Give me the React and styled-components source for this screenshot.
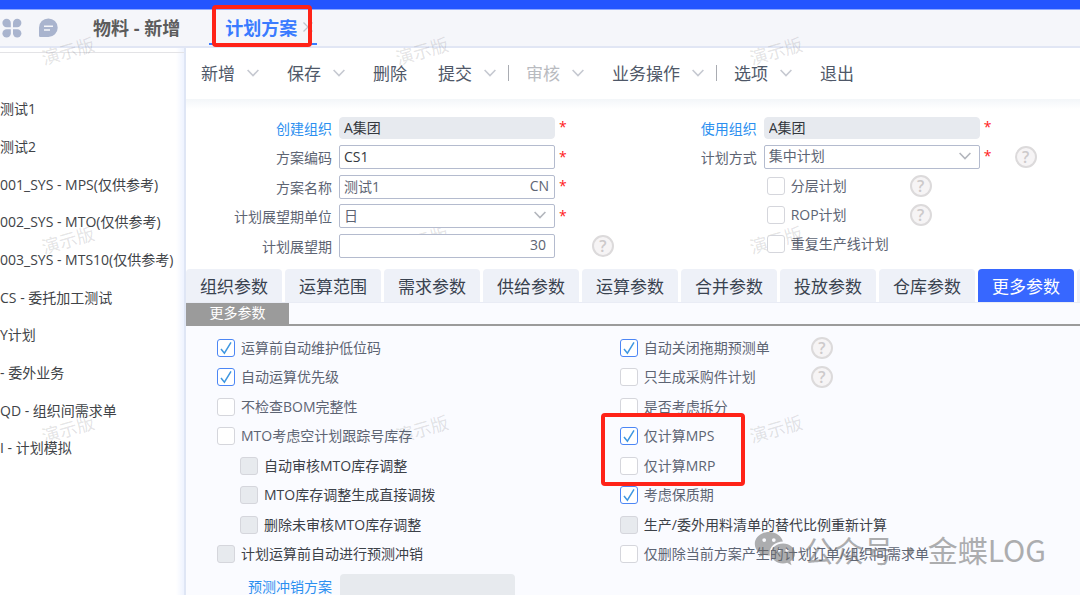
import React, { useState } from 'react';
import styled, { createGlobalStyle, css } from 'styled-components';

const CHECK_MARK = `url("data:image/svg+xml,%3Csvg xmlns='http://www.w3.org/2000/svg' viewBox='0 0 16 16'%3E%3Cpath d='M3 9 L6.4 13.2 L13 2.4' fill='none' stroke='%233f97e0' stroke-width='1.5'/%3E%3C/svg%3E")`;

const GlobalStyle = createGlobalStyle`
  * {
    box-sizing: border-box;
  }

  body {
    margin: 0;
    overflow: hidden;
    color: #5d6473;
    background: #fff;
    font-family: "Open Sans", "Noto Sans CJK SC", sans-serif;
    font-size: 14px;
  }

  button, input, select {
    font: inherit;
    color: inherit;
  }

  button {
    padding: 0;
    border: 0;
    background: none;
    white-space: nowrap;
    cursor: pointer;
  }

  ul {
    margin: 0;
    padding: 0;
    list-style: none;
  }
`;

const Page = styled.div`
  position: relative;
  display: flex;
  flex-direction: column;
  height: 100vh;
  overflow: hidden;
`;

const BrandBar = styled.div`
  flex: none;
  height: 10px;
  background: #2455ff;
  border-bottom: 1px solid #8ea8ff;
`;

// WINDOW TABS
const WindowTabs = styled.nav`
  flex: none;
  display: flex;
  align-items: center;
  height: 38px;
  background: #f5f6fa;
  border-bottom: 2px solid #e1e6f4;
`;

const IconButton = styled.button`
  display: flex;
  width: 20px;
  margin: 0 14px 0 2px;

  & + & {
    margin: 0 35px 0 2px;
  }

  svg {
    width: 20px;
    height: 20px;
  }
`;

const WindowTab = styled.button`
  position: relative;
  height: 34px;
  margin-right: 29px;
  padding-bottom: 2px;
  font-size: 18px;
  font-weight: 700;
  color: #5c5c5c;

  ${({ $active }) => $active && css`
    display: flex;
    align-items: center;
    gap: 6px;
    padding: 0 4px 0 16px;
    color: #3a7bff;
    border-bottom: 2px solid #3a7bff;
  `}
`;

const RedFrame = styled.span`
  position: absolute;
  z-index: 5;
  border: 4px solid #ff2318;
  border-radius: 4px;
  pointer-events: none;
`;

const TabFrame = styled(RedFrame)`
  inset: -6px 5px -4px 3px;
`;

const OptionFrame = styled(RedFrame)`
  top: -8px;
  left: -19px;
  width: 144px;
  height: 73px;
`;

// LAYOUT
const Body = styled.div`
  flex: 1;
  display: flex;
  min-height: 0;
`;

const Sidebar = styled.aside`
  flex: none;
  width: 186px;
  padding-top: 4px;
  overflow: hidden;
  border-right: 2px solid #dfe6f5;
  background: linear-gradient(to left, #eef3ff, #fff 8px);
`;

const SidebarList = styled.ul`
  display: grid;
  grid-auto-rows: 38px 38px 37px;
  align-items: center;
  padding-top: 36px;
  border-top: 1px solid #e3e3e6;
  color: #404347;
  white-space: nowrap;
`;

const Main = styled.main`
  flex: 1;
  display: flex;
  flex-direction: column;
  min-width: 0;
  background: #fafbff;
`;

const Toolbar = styled.div`
  flex: none;
  display: flex;
  align-items: center;
  height: 51px;
  padding: 0 0 2px 15px;
  background: #fff;
`;

const ToolButton = styled.button`
  display: flex;
  align-items: center;
  gap: 12px;
  margin-right: ${({ $menu }) => ($menu ? 28 : 31)}px;
  font-size: 17px;
  color: #4f5868;

  &:disabled {
    color: #b9bbc0;
  }

  svg {
    width: 12px;
    height: 12px;
    color: #c6c9d1;
  }
`;

const ToolDivider = styled.span`
  width: 1px;
  height: 16px;
  margin: 0 17px 0 -16px;
  background: #a9acb2;
`;

// FORM
const FormArea = styled.form`
  flex: none;
  display: grid;
  grid-template-columns: minmax(0, 19fr) minmax(0, 21fr);
  padding: 14px 0 9px;
  background: linear-gradient(#f3f6f9, #fff 10px);
`;

const FormColumn = styled.div`
  display: grid;
  align-content: start;
  grid-auto-rows: ${({ $rows }) => $rows};
`;

const FieldRow = styled.div`
  display: flex;
  align-items: center;
`;

const FieldLabel = styled.label`
  width: 146px;
  margin-right: 7px;
  text-align: right;
  color: ${({ $link }) => ($link ? '#2b8ff0' : 'inherit')};
`;

const FieldBox = styled.div`
  position: relative;
  z-index: 2;
  display: flex;
  align-items: center;
  width: 216px;
  height: ${({ $readOnly }) => ($readOnly ? 22 : 24)}px;
  padding: 0 5px 2px 4px;
  border: 1px solid ${({ $readOnly }) => ($readOnly ? '#e7eaef' : '#b4bbce')};
  border-radius: ${({ $readOnly }) => ($readOnly ? 4 : 2)}px;
  color: ${({ $dark }) => ($dark ? '#33373d' : 'inherit')};
  background: ${({ $readOnly }) => ($readOnly ? '#e7eaef' : '#fff')};

  input, select {
    flex: 1;
    min-width: 0;
    height: 100%;
    padding: 0;
    border: 0;
    outline: none;
    appearance: none;
    background: none;
  }

  select + svg {
    width: 12px;
    height: 12px;
    margin-right: 3px;
    color: #b3b6bd;
    pointer-events: none;
  }
`;

const NumberInput = styled.input`
  text-align: right;
  padding-right: 3px !important;
`;

const Required = styled.span`
  width: 8px;
  margin-left: 4px;
  padding-bottom: 2px;
  color: #ff2020;
`;

const Help = styled.button`
  flex: none;
  width: 22px;
  height: 22px;
  margin-left: ${({ $gap }) => $gap || 0}px;
  border: 2px solid #dcdadb;
  border-radius: 50%;
  font-size: 16px;
  font-weight: 600;
  line-height: 18px;
  color: #cdcacb;
  background: #f6f4f5;
`;

// CHECKBOXES
const CheckRow = styled.div`
  position: relative;
  display: flex;
  align-items: center;
  padding-left: ${({ $indent }) => $indent || 0}px;
`;

const CheckLabel = styled.label`
  display: flex;
  align-items: center;
  gap: 6px;
  min-width: ${({ $width }) => $width}px;
  white-space: nowrap;
  color: ${({ $disabled }) => ($disabled ? '#3c4148' : 'inherit')};

  span {
    padding-bottom: 2px;
  }
`;

const CheckInput = styled.input`
  position: relative;
  z-index: 2;
  appearance: none;
  width: 18px;
  height: 18px;
  margin: 0;
  border: 1px solid #d5d6dc;
  border-radius: 3px;
  background: #fff;

  &:checked {
    border-color: #4c86f5;
    background: #fff ${CHECK_MARK} center / 16px no-repeat;
  }

  &:disabled {
    background: #e7eaee;
  }
`;

// PARAMETER TABS
const ParamTabs = styled.div`
  flex: none;
  display: flex;
  gap: 3px;
  overflow: hidden;
  background: #fff;
  border-bottom: 1px solid #e9ecf5;
`;

const ParamTab = styled.button`
  flex: none;
  height: 33px;
  padding: 0 14px;
  border-radius: 4px 4px 0 0;
  font-size: 17px;
  color: ${({ $active }) => ($active ? '#fff' : '#39424f')};
  background: ${({ $active }) => ($active ? '#3767ff' : '#eef1f8')};
`;

const GroupHeader = styled.div`
  flex: none;
  display: flex;
  height: 23px;
  border-bottom: 2px solid #9b9b9b;

  span {
    width: 103px;
    line-height: 19px;
    text-align: center;
    color: #fff;
    background: #9b9b9b;
  }
`;

const OptionGrid = styled.div`
  display: grid;
  grid-template-columns: minmax(0, 41fr) minmax(0, 50fr);
  padding-top: 7px;
`;

const OptionColumn = styled.div`
  padding-left: 31px;
`;

const OptionList = styled.div`
  display: grid;
  grid-auto-rows: 29px 30px;
`;

const PlanRow = styled.div`
  display: flex;
  align-items: center;
  gap: 8px;
  margin: 5px 0 0 31px;

  label {
    color: #2b8ff0;
  }

  input {
    width: 175px;
    height: 24px;
    border: 0;
    border-radius: 4px;
    background: #e7eaee;
  }
`;

// WATERMARKS
const MarkLayer = styled.div`
  position: absolute;
  z-index: 1;
  inset: 0;
  display: grid;
  grid-template-columns: repeat(3, 354px);
  grid-auto-rows: 189px;
  padding: 39px 0 0 41px;
  overflow: hidden;
  pointer-events: none;

  span {
    justify-self: start;
    align-self: start;
    font-size: 18px;
    line-height: 24px;
    color: rgba(60, 60, 70, 0.15);
    transform: rotate(-16deg);
  }
`;

const AccountMark = styled.div`
  position: absolute;
  z-index: 4;
  right: 34px;
  bottom: 24px;
  display: flex;
  align-items: center;
  font-family: "Noto Sans CJK SC", sans-serif;
  font-size: 30px;
  line-height: 44px;
  color: #6e6e6e;
  opacity: 0.55;
  pointer-events: none;

  svg {
    width: 42px;
    height: 36px;
    margin-right: 8px;
  }

  i {
    width: 34px;
    text-align: center;
    font-style: normal;
  }
`;

const Chevron = () => (
  <svg viewBox="0 0 12 12" fill="none" stroke="currentColor" strokeWidth="1.6" aria-hidden="true">
    <path d="M0.6 3 L6 8.6 L11.4 3" />
  </svg>
);

const AppsIcon = () => (
  <svg viewBox="0 0 20 20" fill="#a9b4ce" aria-hidden="true">
    <path d="M4.6 0.8a4.2 4.2 0 0 1 4.2 4.2v4.2H4.6a4.2 4.2 0 0 1 0-8.4z" />
    <path d="M15.2 0.8a4.2 4.2 0 0 1 0 8.4H11V5a4.2 4.2 0 0 1 4.2-4.2z" />
    <path d="M4.6 11.2h4.2v4.2a4.2 4.2 0 1 1-4.2-4.2z" />
    <path d="M11 11.2h4.2a4.2 4.2 0 1 1-4.2 4.2z" />
  </svg>
);

const ChatIcon = () => (
  <svg viewBox="0 0 20 20" aria-hidden="true">
    <path d="M10.4 0.4a9.3 9.3 0 1 1 0 18.6H2.2a1.2 1.2 0 0 1-1.2-1.2V9.7a9.3 9.3 0 0 1 9.4-9.3z" fill="#a9b4ce" />
    <path d="M6 8.2h9M6 12h6" stroke="#f5f6fa" strokeWidth="1.6" />
  </svg>
);

const CloseIcon = () => (
  <svg width="10" height="10" viewBox="0 0 10 10" stroke="#c0c4cd" strokeWidth="1.3" aria-hidden="true">
    <path d="M0.5 0.5l9 9M9.5 0.5l-9 9" />
  </svg>
);

const WeChatIcon = () => (
  <svg viewBox="0 0 42 36" fill="currentColor" fillRule="evenodd" aria-hidden="true">
    <path d="M15 1C7 1 0.8 6.3 0.8 13c0 3.8 2 7 5.2 9.2L4.6 26.4l5.1-2.6c1.7 0.5 3.500 0.800 5.400 0.800h0.800C14.300 17 20.500 10.600 28.900 10.600C27.600 5 21.900 1 15 1zM10.200 7.200a1.900 1.900 0 1 1 0 3.800a1.900 1.900 0 0 1 0-3.800zM19.800 7.200a1.900 1.900 0 1 1 0 3.800a1.900 1.900 0 0 1 0-3.800z" />
    <path d="M29 12.400c-6.700 0-12 4.500-12 10s5.300 10 12 10c1.500 0 2.900-0.200 4.200-0.600l4.300 2.500l-1.200-3.800c2.900-1.900 4.700-4.800 4.700-8.100c0-5.500-5.300-10-12-10zM25 17.600a1.600 1.600 0 1 1 0 3.200a1.600 1.600 0 0 1 0-3.200zM33 17.600a1.600 1.600 0 1 1 0 3.200a1.600 1.600 0 0 1 0-3.200z" />
  </svg>
);

const SCHEMES = [
  '测试1',
  '测试2',
  '001_SYS - MPS(仅供参考)',
  '002_SYS - MTO(仅供参考)',
  '003_SYS - MTS10(仅供参考)',
  'CS - 委托加工测试',
  'Y计划',
  '- 委外业务',
  'QD - 组织间需求单',
  'I - 计划模拟'
];

const TOOLS = [
  { text: '新增', menu: true },
  { text: '保存', menu: true },
  { text: '删除' },
  { text: '提交', menu: true, divider: true },
  { text: '审核', menu: true, disabled: true },
  { text: '业务操作', menu: true, divider: true },
  { text: '选项', menu: true },
  { text: '退出' }
];

const PARAM_TABS = [
  '组织参数', '运算范围', '需求参数', '供给参数', '运算参数',
  '合并参数', '投放参数', '仓库参数', '更多参数'
];

const PLAN_OPTIONS = [
  { text: '分层计划', help: true },
  { text: 'ROP计划', help: true },
  { text: '重复生产线计划' }
];

const LEFT_OPTIONS = [
  { text: '运算前自动维护低位码', checked: true },
  { text: '自动运算优先级', checked: true },
  { text: '不检查BOM完整性' },
  { text: 'MTO考虑空计划跟踪号库存' },
  { text: '自动审核MTO库存调整', disabled: true, indent: 23 },
  { text: 'MTO库存调整生成直接调拨', disabled: true, indent: 23 },
  { text: '删除未审核MTO库存调整', disabled: true, indent: 23 },
  { text: '计划运算前自动进行预测冲销', disabled: true }
];

const RIGHT_OPTIONS = [
  { text: '自动关闭拖期预测单', checked: true, help: true },
  { text: '只生成采购件计划', help: true },
  { text: '是否考虑拆分' },
  { text: '仅计算MPS', checked: true, framed: true },
  { text: '仅计算MRP' },
  { text: '考虑保质期', checked: true },
  { text: '生产/委外用料清单的替代比例重新计算', disabled: true },
  { text: '仅删除当前方案产生的计划订单/组织间需求单' }
];

const CheckOption = ({ option, width, indent }) => (
  <CheckRow $indent={indent || option.indent}>
    <CheckLabel $width={width} $disabled={option.disabled}>
      <CheckInput type="checkbox" defaultChecked={option.checked} disabled={option.disabled} />
      <span>{option.text}</span>
    </CheckLabel>
    {option.help && <Help type="button" aria-label={`${option.text}说明`}>?</Help>}
    {option.framed && <OptionFrame />}
  </CheckRow>
);

const App = () => {
  const [activeTab, setActiveTab] = useState('更多参数');

  return (
    <Page>
      <GlobalStyle />
      <BrandBar />
      <WindowTabs>
        <IconButton aria-label="应用"><AppsIcon /></IconButton>
        <IconButton aria-label="消息"><ChatIcon /></IconButton>
        <WindowTab>物料 - 新增</WindowTab>
        <WindowTab $active>
          计划方案
          <CloseIcon />
          <TabFrame />
        </WindowTab>
      </WindowTabs>

      <Body>
        <Sidebar>
          <SidebarList>
            {SCHEMES.map((name) => <li key={name}>{name}</li>)}
          </SidebarList>
        </Sidebar>

        <Main>
          <Toolbar>
            {TOOLS.map(({ text, menu, disabled, divider }) => (
              <React.Fragment key={text}>
                <ToolButton $menu={menu} disabled={disabled}>
                  {text}
                  {menu && <Chevron />}
                </ToolButton>
                {divider && <ToolDivider />}
              </React.Fragment>
            ))}
          </Toolbar>

          <FormArea>
            {/* LEFT COLUMN */}
            <FormColumn $rows="29px 30px">
              <FieldRow>
                <FieldLabel htmlFor="createOrg" $link>创建组织</FieldLabel>
                <FieldBox $readOnly $dark><input id="createOrg" defaultValue="A集团" readOnly /></FieldBox>
                <Required>*</Required>
              </FieldRow>
              <FieldRow>
                <FieldLabel htmlFor="code">方案编码</FieldLabel>
                <FieldBox $dark><input id="code" defaultValue="CS1" /></FieldBox>
                <Required>*</Required>
              </FieldRow>
              <FieldRow>
                <FieldLabel htmlFor="name">方案名称</FieldLabel>
                <FieldBox><input id="name" defaultValue="测试1" />CN</FieldBox>
                <Required>*</Required>
              </FieldRow>
              <FieldRow>
                <FieldLabel htmlFor="unit">计划展望期单位</FieldLabel>
                <FieldBox>
                  <select id="unit"><option>日</option></select>
                  <Chevron />
                </FieldBox>
                <Required>*</Required>
              </FieldRow>
              <FieldRow>
                <FieldLabel htmlFor="horizon">计划展望期</FieldLabel>
                <FieldBox><NumberInput id="horizon" defaultValue="30" /></FieldBox>
                <Help type="button" $gap={37} aria-label="计划展望期说明">?</Help>
              </FieldRow>
            </FormColumn>

            {/* RIGHT COLUMN */}
            <FormColumn $rows="29px">
              <FieldRow>
                <FieldLabel htmlFor="useOrg" $link>使用组织</FieldLabel>
                <FieldBox $readOnly $dark><input id="useOrg" defaultValue="A集团" readOnly /></FieldBox>
                <Required>*</Required>
              </FieldRow>
              <FieldRow>
                <FieldLabel htmlFor="mode">计划方式</FieldLabel>
                <FieldBox>
                  <select id="mode"><option>集中计划</option></select>
                  <Chevron />
                </FieldBox>
                <Required>*</Required>
                <Help type="button" $gap={23} aria-label="计划方式说明">?</Help>
              </FieldRow>
              {PLAN_OPTIONS.map((option) => (
                <CheckOption key={option.text} option={option} indent={156} width={143} />
              ))}
            </FormColumn>
          </FormArea>

          <ParamTabs role="tablist">
            {PARAM_TABS.map((tab) => (
              <ParamTab
                key={tab}
                role="tab"
                aria-selected={tab === activeTab}
                $active={tab === activeTab}
                onClick={() => setActiveTab(tab)}
              >
                {tab}
              </ParamTab>
            ))}
            <ParamTab aria-label="下一页" />
          </ParamTabs>

          <GroupHeader><span>更多参数</span></GroupHeader>
          <OptionGrid>
            <OptionColumn>
              <OptionList>
                {LEFT_OPTIONS.map((option) => <CheckOption key={option.text} option={option} />)}
              </OptionList>
              <PlanRow>
                <label htmlFor="offsetPlan">预测冲销方案</label>
                <input id="offsetPlan" disabled />
              </PlanRow>
            </OptionColumn>
            <OptionColumn>
              <OptionList>
                {RIGHT_OPTIONS.map((option) => <CheckOption key={option.text} option={option} width={191} />)}
              </OptionList>
            </OptionColumn>
          </OptionGrid>
        </Main>
      </Body>

      <MarkLayer aria-hidden="true">
        {Array.from({ length: 9 }, (_, i) => <span key={i}>演示版</span>)}
      </MarkLayer>
      <AccountMark>
        <WeChatIcon />
        公众号<i>·</i>金蝶LOG
      </AccountMark>
    </Page>
  );
};

export default App;
